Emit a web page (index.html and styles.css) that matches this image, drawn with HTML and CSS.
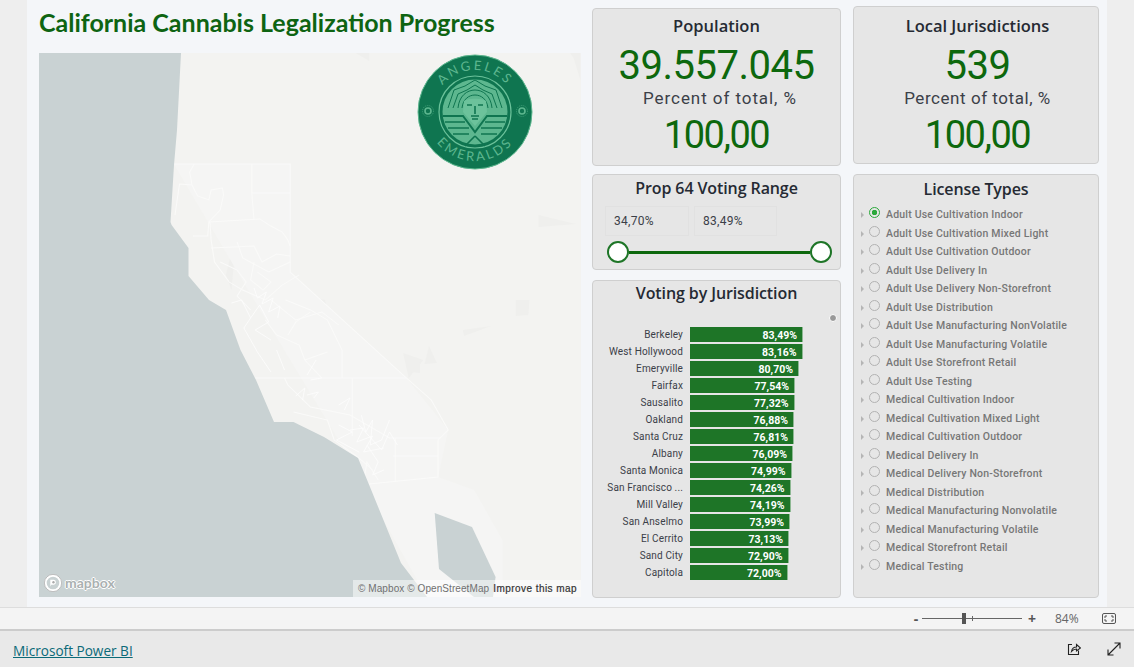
FILE: index.html
```html
<!DOCTYPE html>
<html>

	<head>
		<meta charset="utf-8">
		<title>California Cannabis Legalization Progress</title>
		<link rel="stylesheet" href="styles.css">
	</head>

	<body>
		<main class="stage">
			<div class="canvas">
				<section class="col-map">
					<h1 class="page-title">California Cannabis Legalization Progress</h1>
					<div class="map">
						<svg class="map-base" viewBox="39 53 542 544" preserveAspectRatio="none">
							<rect x="39" y="53" width="542" height="544" fill="#f3f3f1"/>
							<g transform="scale(1.129 1)">
								<!-- terrain -->
								<g fill="#efefed">
									<polygon points="315,53 327,53 327,61"/>
									<polygon points="505,53 514,53 514,80 508,58"/>
									<polygon points="477,215 510,224 477,227"/>
									<polygon points="410,330 435,326 411,336"/>
									<polygon points="357,353 375,360 362,378"/>
									<polygon points="364,372 372,362 372,373"/>
									<polygon points="376,364 380,346 387,363"/>
									<polygon points="457,300 469,300 468,315 457,316"/>
									<polygon points="210,230 200,275 205,290"/>
									<polygon points="240,290 275,345 300,380 288,300"/>
									<polygon points="350,456 378,530 395,597 410,597 375,500"/>
								</g>
								<!-- lighter coast strip -->
								<polygon fill="#f5f5f4" points="154,164 257,164 257,272 360,378 397,430 388,477 420,490 445,540 445,597 378,597 300,440 225,300"/>
								<!-- county lines -->
								<g fill="none" stroke="#fafaf9" stroke-width=".9">
									<path d="M154 164H257V272L360 378L382 400L397 430L388 440L388 477L327 484"/>
									<path d="M223 164V193L225 220M223 193H257"/>
									<path d="M172 164L168 172L170 185L159 184L155 215"/>
									<path d="M170 185L175 196L185 200L187 190L197 188L198 195L195 210L185 222L184 236L171 236"/>
									<path d="M185 222L230 219L240 226L250 232L255 240L257 246"/>
									<path d="M186 222L187 240L190 262L203 282L215 290L235 300L250 285L265 275"/>
									<path d="M187 248L225 246L232 262L245 254L257 256"/>
									<path d="M210 242L215 258L238 272L257 262"/>
									<path d="M225 262L222 280L233 290L240 282L228 272"/>
									<path d="M195 262L210 270L218 282L210 296L222 310"/>
									<path d="M253 300L275 310L290 320L303 350V378"/>
									<path d="M235 320L245 335L265 345L270 360L285 378"/>
									<path d="M255 335L262 322L275 312M270 360L290 352"/>
									<path d="M240 300L262 320L285 312L300 325"/>
									<path d="M225 378H360M312 378V436"/>
									<path d="M252 378L255 385L275 407L310 415L345 438H390"/>
									<path d="M348 456H388M350 438V482"/>
									<path d="M197 317L210 345M211 350L213 372L225 378"/>
									<path d="M260 412L290 420L296 440L318 458L330 470"/>
									<path d="M322 482L325 462L335 480"/>
								</g>
								<!-- city boundaries -->
								<g fill="none" stroke="#fdfdfd" stroke-width=".7">
									<path d="M225 288L228 298L236 292L232 304L242 298L238 312L248 306L246 318"/>
									<path d="M205 303L214 300L222 318L230 305L238 322L226 330L240 340"/>
									<path d="M272 395L282 392L278 398M275 380L285 378M300 405L310 398L305 410"/>
									<path d="M320 415L324 432L330 420L328 445L338 440L345 420"/>
									<path d="M300 425L312 432L298 440L318 452M318 425L338 450L345 432L352 445"/>
									<path d="M325 445L335 462L330 475L340 470"/>
									<path d="M310 430L322 428L316 442L330 436L322 452L340 448"/>
									<path d="M245 350L252 370M280 360L272 375M262 396L270 388L268 400"/>
									<path d="M222 318L216 328L228 352L240 372"/>
								</g>
							</g>
							<!-- ocean -->
							<polygon fill="#c9d2d3" points="39,53 181,53 177,130 174,165 170.500,222 171.600,225 188.500,248 188.500,276 209,300 226,310 240.500,350 256,380 274,422 293.500,422 324,437 358,458 370,487 401,563 427,597 39,597"/>
							<polygon fill="#c9d2d3" points="434.700,513 472,527 495.600,577 493,597 474,597 439,569"/>
						</svg>

						<svg class="logo" viewBox="0 0 116 116">
							<defs>
								<path id="arc-top" d="M16 58A42 42 0 0 1 100 58"/>
								<path id="arc-bottom" d="M9 58A49 49 0 0 0 107 58"/>
							</defs>
							<circle cx="58" cy="58" r="57" fill="#0f7550" stroke="#5db78f" stroke-width="1"/>
							<circle cx="58" cy="58" r="36" fill="none" stroke="#6cc29b" stroke-width="1.2"/>
							<circle cx="58" cy="58" r="32.500" fill="#5db78f"/>
							<g fill="none" stroke="#0f7550" stroke-width="1">
								<path d="M31 54L37 36L48 32L58 26L68 32L79 36L85 54"/>
								<path d="M36 54L41 40L50 36L58 31L66 36L75 40L80 54"/>
								<path d="M41 54C42 42 50 36 58 36S74 42 75 54"/>
								<path d="M45 54C46 45 52 41 58 41S70 45 71 54"/>
							</g>
							<path d="M26 62H46L58 78L70 62H90" fill="none" stroke="#0f7550" stroke-width="2"/>
							<g stroke="#0f7550" stroke-width="1.400">
								<path d="M28 68H48M68 68H88M31 74H52M64 74H85M36 80H52M64 80H80"/>
							</g>
							<path d="M58 82L48 92M58 82L68 92" stroke="#0f7550" stroke-width="1.600"/>
							<path d="M47 47C50 44 66 44 69 47L70 58L58 72L46 58Z" fill="#6cc29b"/>
							<path d="M50 51H55M61 51H66M58 52V60M54 62H62M55 65H61" stroke="#0f7550" stroke-width="1.600" fill="none"/>
							<g fill="none" stroke="#5db78f">
								<circle cx="11" cy="57" r="3" stroke-width="1.600"/>
								<circle cx="105" cy="57" r="3" stroke-width="1.600"/>
								<circle cx="11" cy="57" r="5.500" stroke-width=".6" stroke-dasharray="1 1"/>
								<circle cx="105" cy="57" r="5.500" stroke-width=".6" stroke-dasharray="1 1"/>
							</g>
							<text class="logo-text"><textPath href="#arc-top" startOffset="50%">ANGELES</textPath></text>
							<text class="logo-text"><textPath href="#arc-bottom" startOffset="50%">EMERALDS</textPath></text>
						</svg>

						<div class="mapbox-mark">
							<svg class="mapbox-icon" viewBox="0 0 20 20">
								<circle cx="10" cy="10" r="8.500" fill="#c9d2d3" stroke="#fff" stroke-width="3"/>
								<circle cx="10" cy="10" r="9.600" fill="none" stroke="#999" stroke-width=".7"/>
								<path d="M7 14V6.500H11A2.800 2.800 0 0 1 11 12H8Z" fill="#fff"/>
								<circle cx="10.500" cy="9.200" r="1.300" fill="#aaa"/>
							</svg>
							<span class="mapbox-word">mapbox</span>
						</div>
						<div class="attribution">
							<span>© Mapbox © OpenStreetMap</span>
							<b>Improve this map</b>
						</div>
					</div>
				</section>

				<section class="col-mid">
					<div class="card kpi">
						<h2 class="card-title">Population</h2>
						<div class="kpi-value">39.557.045</div>
						<div class="kpi-label">Percent of total, %</div>
						<div class="kpi-value kpi-pct">100,00</div>
					</div>

					<div class="card range">
						<h2 class="card-title">Prop 64 Voting Range</h2>
						<div class="range-inputs">
							<div class="range-box">34,70%</div>
							<div class="range-box">83,49%</div>
						</div>
						<div class="slider">
							<span class="slider-handle"></span>
							<span class="slider-line"></span>
							<span class="slider-handle"></span>
						</div>
					</div>

					<div class="card voting">
						<h2 class="card-title">Voting by Jurisdiction</h2>
						<span class="scroll-dot"></span>
						<ul class="bars">
							<li><span class="bar-name">Berkeley</span><span class="bar" style="width:113px">83,49%</span></li>
							<li><span class="bar-name">West Hollywood</span><span class="bar" style="width:112.5px">83,16%</span></li>
							<li><span class="bar-name">Emeryville</span><span class="bar" style="width:109px">80,70%</span></li>
							<li><span class="bar-name">Fairfax</span><span class="bar" style="width:105px">77,54%</span></li>
							<li><span class="bar-name">Sausalito</span><span class="bar" style="width:104.5px">77,32%</span></li>
							<li><span class="bar-name">Oakland</span><span class="bar" style="width:104px">76,88%</span></li>
							<li><span class="bar-name">Santa Cruz</span><span class="bar" style="width:104px">76,81%</span></li>
							<li><span class="bar-name">Albany</span><span class="bar" style="width:103px">76,09%</span></li>
							<li><span class="bar-name">Santa Monica</span><span class="bar" style="width:101.5px">74,99%</span></li>
							<li><span class="bar-name">San Francisco ...</span><span class="bar" style="width:100.5px">74,26%</span></li>
							<li><span class="bar-name">Mill Valley</span><span class="bar" style="width:100.5px">74,19%</span></li>
							<li><span class="bar-name">San Anselmo</span><span class="bar" style="width:100px">73,99%</span></li>
							<li><span class="bar-name">El Cerrito</span><span class="bar" style="width:99px">73,13%</span></li>
							<li><span class="bar-name">Sand City</span><span class="bar" style="width:98.5px">72,90%</span></li>
							<li><span class="bar-name">Capitola</span><span class="bar" style="width:97.5px">72,00%</span></li>
						</ul>
					</div>
				</section>

				<section class="col-right">
					<div class="card kpi kpi-right">
						<h2 class="card-title">Local Jurisdictions</h2>
						<div class="kpi-value">539</div>
						<div class="kpi-label">Percent of total, %</div>
						<div class="kpi-value kpi-pct">100,00</div>
					</div>

					<div class="card license">
						<h2 class="card-title">License Types</h2>
						<ul class="license-list">
							<li class="on">Adult Use Cultivation Indoor</li>
							<li>Adult Use Cultivation Mixed Light</li>
							<li>Adult Use Cultivation Outdoor</li>
							<li>Adult Use Delivery In</li>
							<li>Adult Use Delivery Non-Storefront</li>
							<li>Adult Use Distribution</li>
							<li>Adult Use Manufacturing NonVolatile</li>
							<li>Adult Use Manufacturing Volatile</li>
							<li>Adult Use Storefront Retail</li>
							<li>Adult Use Testing</li>
							<li>Medical Cultivation Indoor</li>
							<li>Medical Cultivation Mixed Light</li>
							<li>Medical Cultivation Outdoor</li>
							<li>Medical Delivery In</li>
							<li>Medical Delivery Non-Storefront</li>
							<li>Medical Distribution</li>
							<li>Medical Manufacturing Nonvolatile</li>
							<li>Medical Manufacturing Volatile</li>
							<li>Medical Storefront Retail</li>
							<li>Medical Testing</li>
						</ul>
					</div>
				</section>
			</div>
		</main>

		<div class="zoombar">
			<span class="zoom-btn">-</span>
			<span class="zoom-track"><span class="zoom-thumb"></span><span class="zoom-tick"></span></span>
			<span class="zoom-btn">+</span>
			<span class="zoom-pct">84%</span>
			<svg class="fit-icon" width="14" height="11" viewBox="0 0 14 11">
				<rect x=".5" y=".5" width="13" height="10" rx="1.5" fill="none" stroke="#555"/>
				<path d="M3 5V3H5M9 3H11V5M11 6V8H9M5 8H3V6" fill="none" stroke="#555"/>
			</svg>
		</div>

		<footer class="footer">
			<a class="pbi-link" href="#">Microsoft Power BI</a>
			<div class="footer-icons">
				<svg width="14" height="14" viewBox="0 0 14 14">
					<path d="M5 2.500H1.500V12.500H11.500V8.500" fill="none" stroke="#222" stroke-width="1.100"/>
					<path d="M4.500 9.500C5 6.500 7 5 9.500 5V2.500L13.500 6L9.500 9V7C7.500 7 6 7.800 4.500 9.500Z" fill="none" stroke="#222" stroke-width="1.100"/>
				</svg>
				<svg width="14" height="14" viewBox="0 0 14 14">
					<path d="M1 13L13 1M7.500 1H13V6.500M1 7.500V13H6.500" fill="none" stroke="#222" stroke-width="1.100"/>
				</svg>
			</div>
		</footer>
	</body>

</html>
```

FILE: styles.css
```css
* {
	box-sizing: border-box;
}
html, body {
	margin: 0;
	padding: 0;
	height: 100%;
	overflow: hidden;
}
body {
	display: flex;
	flex-direction: column;
	background-color: #eeeeee;
	font-family: "Open Sans", "Liberation Sans", sans-serif;
}
ul, li, h1, h2 {
	margin: 0;
	padding: 0;
	list-style: none;
}

/* report area */
.stage {
	height: 607px;
	padding: 0 27px;
}
.canvas {
	display: grid;
	grid-template-columns: 542px 249px 247px;
	column-gap: 11px;
	height: 607px;
	padding: 0 8px 9px 12px;
	background-color: #f4f6f9;
}
.col-map {
	display: flex;
	flex-direction: column;
}
.col-mid {
	display: flex;
	flex-direction: column;
	padding-top: 8px;
}
.col-right {
	display: flex;
	flex-direction: column;
	padding-top: 6px;
	margin-left: 1px;
}
.page-title {
	height: 53px;
	padding-top: 5px;
	font-family: "Lato", "Open Sans", sans-serif;
	font-size: 25px;
	line-height: 34px;
	font-weight: 700;
	color: #0e6412;
	white-space: nowrap;
}

/* map */
.map {
	position: relative;
	height: 544px;
	overflow: hidden;
}
.map-base {
	display: block;
	width: 100%;
	height: 100%;
}
.logo {
	position: absolute;
	left: 378px;
	top: 1px;
	width: 116px;
	height: 116px;
}
.logo-text {
	font-family: "Lato", sans-serif;
	font-size: 13px;
	letter-spacing: 2.5px;
	fill: #5db78f;
	text-anchor: middle;
}
.mapbox-mark {
	position: absolute;
	left: 5px;
	bottom: 5px;
	display: flex;
	align-items: center;
	gap: 3px;
}
.mapbox-icon {
	width: 18px;
	height: 18px;
}
.mapbox-word {
	font-family: "Lato", sans-serif;
	font-size: 14px;
	font-weight: 700;
	line-height: 16px;
	color: #aab0b1;
	text-shadow: 1px 0 #fff, -1px 0 #fff, 0 1px #fff, 0 -1px #fff;
}
.attribution {
	position: absolute;
	right: 0;
	bottom: 0;
	display: flex;
	gap: 4px;
	width: 228px;
	height: 17px;
	padding: 0 4px 0 5px;
	background-color: rgba(255, 255, 255, .5);
	font-family: "Liberation Sans", sans-serif;
	font-size: 10px;
	line-height: 18px;
	letter-spacing: .08px;
	color: #707070;
	white-space: nowrap;
}
.attribution b {
	font-weight: 400;
	letter-spacing: .45px;
	color: #333;
	-webkit-text-stroke: .2px #333;
}

/* cards */
.card {
	position: relative;
	background-color: #e6e6e6;
	border: 1px solid #cfcfcf;
	border-radius: 4px;
}
.card-title {
	font-size: 16px;
	font-weight: 600;
	line-height: 22px;
	letter-spacing: -.1px;
	color: #252a33;
	text-align: center;
}
.kpi {
	height: 158px;
	padding-top: 5px;
	text-align: center;
}
.kpi-right {
	padding: 7px 0 0 3px;
}
.kpi .card-title {
	margin-bottom: 5px;
	font-size: 16.500px;
	line-height: 24px;
	letter-spacing: 0;
}
.kpi-value {
	font-family: "Roboto", sans-serif;
	font-size: 40px;
	line-height: 46px;
	letter-spacing: -.5px;
	color: #0d680d;
}
.kpi-pct {
	font-size: 38px;
	letter-spacing: -1.500px;
}
.kpi-label {
	margin: -1px 0 4px;
	padding-left: 7px;
	font-family: "Roboto", sans-serif;
	font-size: 17px;
	line-height: 20px;
	letter-spacing: .93px;
	color: #3b4048;
}
.kpi-right .kpi-label {
	padding-left: 0;
	letter-spacing: .55px;
}
.range {
	height: 96px;
	margin-top: 8px;
	padding-top: 2px;
}
.range-inputs {
	display: flex;
	gap: 5px;
	margin: 7px 0 0 12px;
}
.range-box {
	width: 84px;
	height: 30px;
	padding-left: 8px;
	border: 1px solid #e1e1e1;
	font-family: "Roboto", sans-serif;
	font-size: 12px;
	line-height: 28px;
	letter-spacing: .3px;
	color: #3b4048;
}
.range-box + .range-box {
	width: 83px;
}
.slider {
	display: flex;
	align-items: center;
	margin: 5px 8px 0 14px;
}
.slider-handle {
	flex: none;
	width: 22px;
	height: 22px;
	background-color: #fff;
	border: 2px solid #1e7527;
	border-radius: 50%;
}
.slider-line {
	flex: 1;
	height: 3px;
	background-color: #0d680d;
}
.voting {
	flex: 1;
	margin-top: 10px;
	padding-top: 1px;
}
.scroll-dot {
	position: absolute;
	right: 3px;
	top: 33px;
	width: 8px;
	height: 8px;
	background-color: #999;
	border: 1px solid #fff;
	border-radius: 50%;
}
.bars {
	margin-top: 22px;
}
.bars li {
	display: flex;
	align-items: center;
	height: 17px;
}
.bar-name {
	flex: none;
	width: 90px;
	margin-right: 7px;
	font-family: "Roboto", sans-serif;
	font-size: 10px;
	letter-spacing: .15px;
	color: #3b4048;
	text-align: right;
	white-space: nowrap;
}
.bar {
	display: block;
	height: 15px;
	padding-right: 5px;
	background-color: #1e7527;
	border-right: 1px solid #8db892;
	font-family: "Roboto", sans-serif;
	font-size: 10.500px;
	font-weight: 700;
	line-height: 17px;
	color: #fff;
	text-align: right;
}
.license {
	flex: 1;
	margin-top: 10px;
	padding-top: 3px;
}
.license-list {
	margin-top: 6px;
}
.license-list li {
	position: relative;
	height: 18.53px;
	padding-left: 32px;
	font-family: "Roboto", sans-serif;
	font-size: 10.500px;
	font-weight: 500;
	line-height: 18.530px;
	letter-spacing: .2px;
	color: #777;
	white-space: nowrap;
}
.license-list li::before {
	content: "";
	position: absolute;
	left: 7px;
	top: 6px;
	border-left: 3px solid #b5b5b5;
	border-top: 3px solid transparent;
	border-bottom: 3px solid transparent;
}
.license-list li::after {
	content: "";
	box-sizing: border-box;
	position: absolute;
	left: 15px;
	top: 1px;
	width: 11px;
	height: 11px;
	border: 1px solid #b2b2b2;
	border-radius: 50%;
}
.license-list li.on::after {
	background: radial-gradient(circle, #2aa93a 0 2.500px, #e6e6e6 3px);
	border: 1.500px solid #2aa93a;
}

/* bottom bars */
.zoombar {
	display: flex;
	align-items: center;
	height: 24px;
	padding-left: 913px;
	background-color: #f4f4f4;
	border-top: 1px solid #dddddd;
	border-bottom: 2px solid #cccccc;
	color: #555;
}
.zoom-btn {
	width: 6px;
	font-size: 14px;
	font-weight: 700;
	line-height: 20px;
	text-align: center;
}
.zoom-track {
	position: relative;
	width: 100px;
	height: 1px;
	margin: 0 6px 0 3px;
	background-color: #666;
}
.zoom-thumb {
	position: absolute;
	left: 40px;
	top: -5px;
	width: 4px;
	height: 11px;
	background-color: #555;
}
.zoom-tick {
	position: absolute;
	left: 50px;
	top: -2px;
	width: 1px;
	height: 5px;
	background-color: #666;
}
.zoom-pct {
	margin-left: 21px;
	font-size: 12px;
	color: #666;
}
.fit-icon {
	margin-left: 23px;
}
.footer {
	display: flex;
	align-items: center;
	justify-content: space-between;
	flex: 1;
	padding: 2px 13px 0;
	background-color: #e9e9e9;
}
.pbi-link {
	font-size: 13.600px;
	color: #0b6a78;
	text-decoration: underline;
}
.footer-icons {
	display: flex;
	gap: 26px;
	margin-top: -2px;
}
```
